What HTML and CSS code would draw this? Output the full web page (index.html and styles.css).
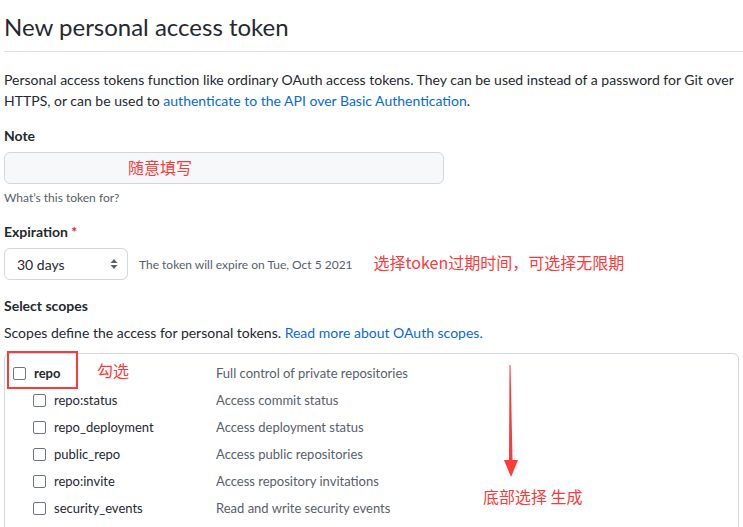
FILE: index.html
```html
<!DOCTYPE html>
<html lang="en">
<head>
<meta charset="utf-8">
<title>New personal access token</title>
<link rel="stylesheet" href="styles.css">
</head>
<body>
<div class="page">
  <h1 class="title">New personal access token</h1>
  <p class="intro">Personal access tokens function like ordinary OAuth access tokens. They can be used instead of a password for Git over HTTPS, or can be used to <a class="link" href="#">authenticate to the API over Basic Authentication</a>.</p>

  <div class="field note-field">
    <div class="label">Note</div>
    <div class="input"><span class="ann ann-note">随意填写</span></div>
    <div class="help">What’s this token for?</div>
  </div>

  <div class="field exp-field">
    <div class="label">Expiration <span class="req">*</span></div>
    <div class="exp-row">
      <div class="select">
        <span>30 days</span>
        <svg class="select-arrows" width="8" height="12" viewBox="0 0 8 12"><path d="M4 1 L7.5 5 L0.5 5 Z M4 11 L7.5 7 L0.5 7 Z" fill="#57606a"/></svg>
      </div>
      <span class="exp-note">The token will expire on Tue, Oct 5 2021</span>
      <span class="ann ann-exp">选择token过期时间，可选择无限期</span>
    </div>
  </div>

  <div class="field scopes-field">
    <div class="label">Select scopes</div>
    <p class="scopes-desc">Scopes define the access for personal tokens. <a class="link" href="#">Read more about OAuth scopes.</a></p>
  </div>

  <div class="scopes">
    <div class="row row-top">
      <div class="name"><span class="cb"></span><span class="scope-main">repo</span></div>
      <div class="desc">Full control of private repositories</div>
    </div>
    <div class="row row-sub">
      <div class="name"><span class="cb"></span><span>repo:status</span></div>
      <div class="desc">Access commit status</div>
    </div>
    <div class="row row-sub">
      <div class="name"><span class="cb"></span><span>repo_deployment</span></div>
      <div class="desc">Access deployment status</div>
    </div>
    <div class="row row-sub">
      <div class="name"><span class="cb"></span><span>public_repo</span></div>
      <div class="desc">Access public repositories</div>
    </div>
    <div class="row row-sub">
      <div class="name"><span class="cb"></span><span>repo:invite</span></div>
      <div class="desc">Access repository invitations</div>
    </div>
    <div class="row row-sub">
      <div class="name"><span class="cb"></span><span>security_events</span></div>
      <div class="desc">Read and write security events</div>
    </div>

    <div class="mark-box"></div>
    <span class="ann ann-check">勾选</span>
    <svg class="arrow" width="20" height="116" viewBox="0 0 20 116"><path d="M9.5 0 L10.5 0 L12.5 95 L18 95 L11 112 L4 95 L9 95 Z" fill="#fd3a3a"/></svg>
    <span class="ann ann-bottom">底部选择 生成</span>
  </div>
</div>
</body>
</html>
```
FILE: styles.css
```css
* { box-sizing: border-box; }
html, body { overflow: hidden; }
body {
  margin: 0;
  background: #ffffff;
  color: #24292f;
  font-family: Lato, "Liberation Sans", Arial, sans-serif;
  font-size: 14px;
  line-height: 21px;
}
.page { padding: 0 0 0 4px; }
.title {
  margin: 0;
  padding-top: 9px;
  font-size: 24px;
  font-weight: 400;
  line-height: 36px;
  padding-bottom: 6px;
  border-bottom: 1px solid #d8dee4;
  margin-right: -4px;
}
.intro {
  margin: 17px 2px 0 0;
}
.link { color: #0969da; text-decoration: none; }
.label { font-weight: 700; line-height: 21px; }
.note-field { margin-top: 14px; }
.input {
  margin-top: 6px;
  width: 440px;
  height: 32px;
  background: #f6f8fa;
  border: 1px solid #d0d7de;
  border-radius: 6px;
  display: flex;
  align-items: center;
  padding-left: 123px;
}
.ann-note { margin-top: -2px; }
.help {
  margin-top: 5px;
  font-size: 12px;
  line-height: 18px;
  color: #57606a;
}
.ann {
  color: #fd3a3a;
  font-family: "Noto Sans CJK SC", "Liberation Sans", sans-serif;
  font-size: 16px;
  line-height: 20px;
}
.exp-field { margin-top: 14px; }
.req { color: #cf222e; }
.exp-row {
  margin-top: 6px;
  display: flex;
  align-items: center;
}
.select {
  width: 124px;
  height: 32px;
  border: 1px solid #d0d7de;
  border-radius: 6px;
  display: flex;
  align-items: center;
  justify-content: space-between;
  padding: 0 9px 0 12px;
}
.exp-note {
  margin-left: 11px;
  font-size: 12px;
  color: #57606a;
}
.ann-exp { margin-left: 21px; margin-top: -4px; }
.scopes-field { margin-top: 15px; }
.scopes-desc { margin: 6px 0 0; }
.scopes {
  position: relative;
  margin-top: 10px;
  width: 735px;
  height: 200px;
  border: 1px solid #d0d7de;
  border-radius: 6px;
  padding-top: 6px;
}
.row {
  display: grid;
  grid-template-columns: 211px 1fr;
  height: 27px;
  align-items: center;
  font-size: 13px;
  color: #24292f;
}
.name { display: flex; align-items: center; }
.row-top .name { padding-left: 8px; }
.row-sub .name { padding-left: 28px; }
.cb {
  width: 13px;
  height: 13px;
  border: 1px solid #6e7781;
  border-radius: 2px;
  margin-right: 8px;
  background: #fff;
}
.scope-main { font-weight: 700; }
.desc { color: #57606a; }
.mark-box {
  position: absolute;
  left: 2px;
  top: -3px;
  width: 71px;
  height: 38px;
  border: 2px solid #fd3a3a;
}
.ann-check { position: absolute; left: 92px; top: 6px; }
.arrow { position: absolute; left: 495px; top: 11px; }
.ann-bottom { position: absolute; left: 478px; top: 132px; }
```
